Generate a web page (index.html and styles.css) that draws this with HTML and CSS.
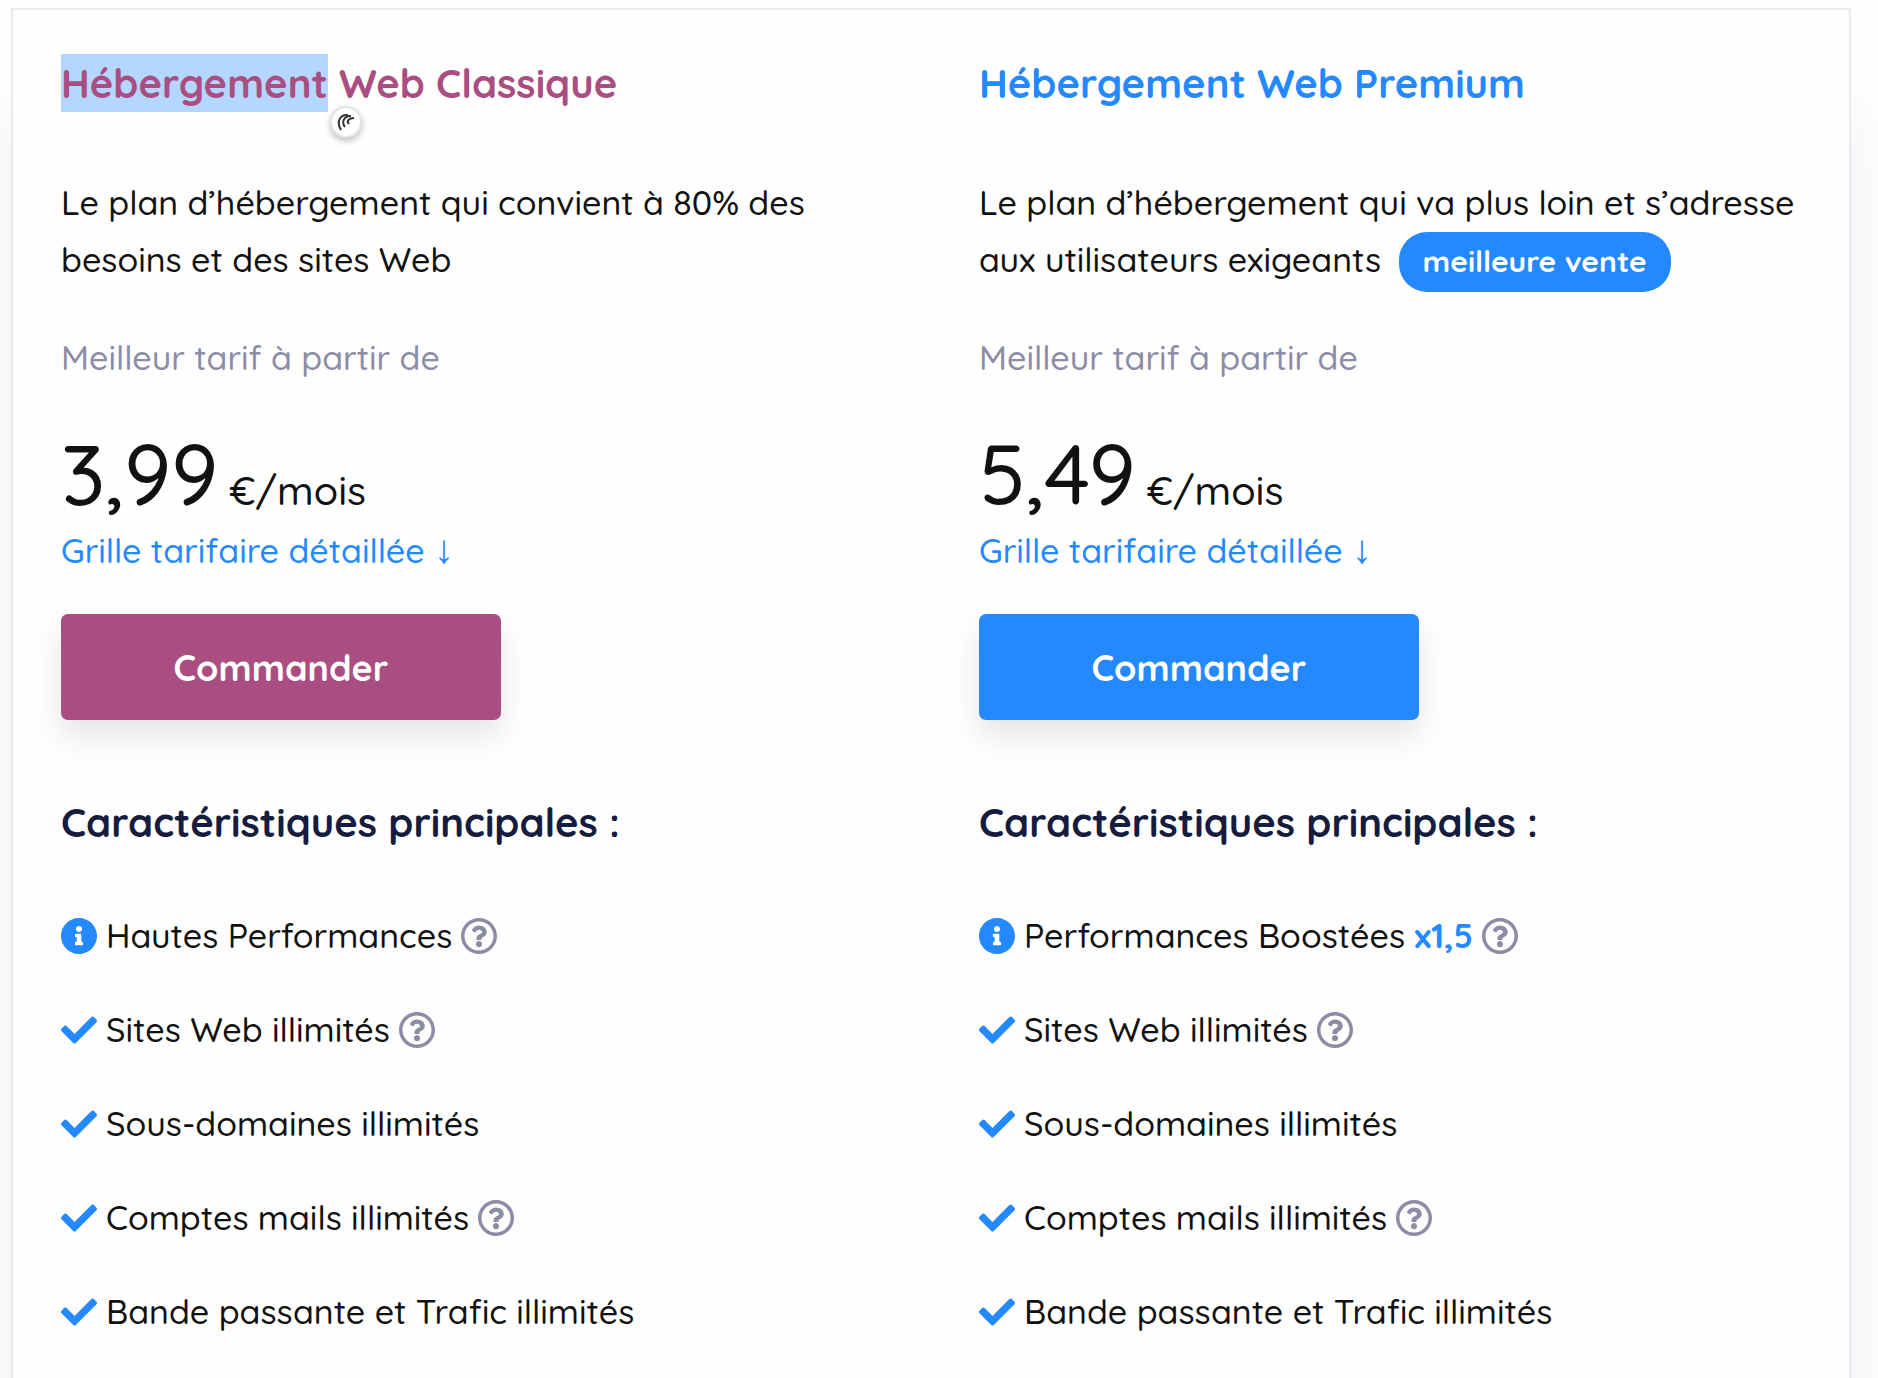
FILE: index.html
```html
<!DOCTYPE html>
<html lang="fr">
<head>
    <meta charset="UTF-8">
    <meta name="viewport" content="width=device-width, initial-scale=1.0">
    <title>Hébergement Web</title>
    <link rel="stylesheet" href="styles.css">
</head>
<body>
    <!-- Icons -->
    <svg class="sprite" aria-hidden="true">
        <symbol id="check" viewBox="0 0 512 512">
            <path d="M173.898 439.404l-166.4-166.4c-9.997-9.997-9.997-26.206 0-36.204l36.203-36.204c9.997-9.998 26.207-9.998 36.204 0L192 312.69 432.095 72.596c9.997-9.997 26.207-9.997 36.204 0l36.203 36.204c9.997 9.997 9.997 26.206 0 36.204l-294.4 294.401c-9.998 9.997-26.207 9.997-36.204-.001z"/>
        </symbol>
        <symbol id="info" viewBox="8 8 496 496">
            <path d="M256 8C119.043 8 8 119.083 8 256c0 136.997 111.043 248 248 248s248-111.003 248-248C504 119.083 392.957 8 256 8zm0 110c23.196 0 42 18.804 42 42s-18.804 42-42 42-42-18.804-42-42 18.804-42 42-42zm56 254c0 6.627-5.373 12-12 12h-88c-6.627 0-12-5.373-12-12v-24c0-6.627 5.373-12 12-12h12v-64h-12c-6.627 0-12-5.373-12-12v-24c0-6.627 5.373-12 12-12h64c6.627 0 12 5.373 12 12v100h12c6.627 0 12 5.373 12 12v24z"/>
        </symbol>
        <symbol id="question" viewBox="8 8 496 496">
            <path d="M256 8C119.043 8 8 119.083 8 256c0 136.997 111.043 248 248 248s248-111.003 248-248C504 119.083 392.957 8 256 8zm0 448c-110.532 0-200-89.431-200-200 0-110.495 89.472-200 200-200 110.491 0 200 89.471 200 200 0 110.53-89.431 200-200 200zm107.244-255.2c0 67.052-72.421 68.084-72.421 92.863V300c0 6.627-5.373 12-12 12h-45.647c-6.627 0-12-5.373-12-12v-8.659c0-35.745 27.1-50.034 47.579-61.516 17.561-9.845 28.324-16.541 28.324-29.579 0-17.246-21.999-28.693-39.784-28.693-23.189 0-33.894 10.977-48.942 29.969-4.057 5.12-11.46 6.071-16.666 2.124l-27.824-21.098c-5.107-3.872-6.251-11.066-2.644-16.363C184.846 131.491 214.94 112 261.794 112c49.071 0 101.45 38.304 101.45 88.8zM298 368c0 23.159-18.841 42-42 42s-42-18.841-42-42 18.841-42 42-42 42 18.841 42 42z"/>
        </symbol>
    </svg>

    <main class="plans">
        <!-- Classique -->
        <section class="plan classique">
            <h2><mark>Hébergement<button class="bubble" type="button" aria-label="Assistant">
                <svg viewBox="0 0 18 18">
                    <path d="M4 17C-1 9 3 1 11 2"/>
                    <path d="M8 14C4 9 7 3 14 3"/>
                    <path d="M12 11C9 8 12 5 17 5"/>
                </svg>
            </button></mark> Web Classique</h2>
            <p class="description">Le plan d’hébergement qui convient à 80% des besoins et des sites Web</p>
            <p class="tarif">Meilleur tarif à partir de</p>
            <p class="price"><span class="amount">3,99</span> €/mois</p>
            <p class="grille"><a href="#tarifs">Grille tarifaire détaillée <span class="arrow">↓</span></a></p>
            <button class="commander" type="button">Commander</button>
            <h3>Caractéristiques principales :</h3>
            <ul class="features">
                <li><svg class="icon"><use href="#info"/></svg><span>Hautes Performances</span><button class="help" type="button" aria-label="Aide"><svg class="icon"><use href="#question"/></svg></button></li>
                <li><svg class="icon"><use href="#check"/></svg><span>Sites Web illimités</span><button class="help" type="button" aria-label="Aide"><svg class="icon"><use href="#question"/></svg></button></li>
                <li><svg class="icon"><use href="#check"/></svg><span>Sous-domaines illimités</span></li>
                <li><svg class="icon"><use href="#check"/></svg><span>Comptes mails illimités</span><button class="help" type="button" aria-label="Aide"><svg class="icon"><use href="#question"/></svg></button></li>
                <li><svg class="icon"><use href="#check"/></svg><span>Bande passante et Trafic illimités</span></li>
            </ul>
        </section>

        <!-- Premium -->
        <section class="plan premium">
            <h2>Hébergement Web Premium</h2>
            <p class="description">Le plan d’hébergement qui va plus loin et s’adresse aux utilisateurs exigeants <span class="badge">meilleure vente</span></p>
            <p class="tarif">Meilleur tarif à partir de</p>
            <p class="price"><span class="amount">5,49</span> €/mois</p>
            <p class="grille"><a href="#tarifs">Grille tarifaire détaillée <span class="arrow">↓</span></a></p>
            <button class="commander" type="button">Commander</button>
            <h3>Caractéristiques principales :</h3>
            <ul class="features">
                <li><svg class="icon"><use href="#info"/></svg><span>Performances Boostées <strong>x1,5</strong></span><button class="help" type="button" aria-label="Aide"><svg class="icon"><use href="#question"/></svg></button></li>
                <li><svg class="icon"><use href="#check"/></svg><span>Sites Web illimités</span><button class="help" type="button" aria-label="Aide"><svg class="icon"><use href="#question"/></svg></button></li>
                <li><svg class="icon"><use href="#check"/></svg><span>Sous-domaines illimités</span></li>
                <li><svg class="icon"><use href="#check"/></svg><span>Comptes mails illimités</span><button class="help" type="button" aria-label="Aide"><svg class="icon"><use href="#question"/></svg></button></li>
                <li><svg class="icon"><use href="#check"/></svg><span>Bande passante et Trafic illimités</span></li>
            </ul>
        </section>
    </main>
</body>
</html>
```
FILE: styles.css
```css
* {
    box-sizing: border-box;
}

body {
    margin: 0;
    padding: 8px 27px 0 11px;
    min-height: 100vh;
    display: flex;
    background-color: #fefefe;
    color: #111;
    font-family: Quicksand, Lato, sans-serif;
    font-size: 34px;
    font-weight: 500;
    line-height: 57px;
}

h2, h3, p, ul {
    margin: 0;
    padding: 0;
}

button {
    font-family: inherit;
    border: none;
    cursor: pointer;
}

.sprite {
    display: none;
}

.plans {
    flex: 1;
    display: grid;
    grid-template-columns: 1fr 1fr;
    background-color: #fefefe;
    border: 2px solid #e9eaef;
    border-bottom: none;
    box-shadow: 0 100px 60px rgba(22, 28, 80, 0.06);
}

.plan {
    padding: 44px 48px 34px;
}

h2 {
    font-size: 40px;
    line-height: 58px;
    margin-bottom: 62px;
}

.classique h2 {
    color: #aa4e82;
}

.premium h2 {
    color: #2489ff;
}

mark {
    position: relative;
    display: inline-block;
    background-color: #b3d7ff;
    color: inherit;
}

.bubble {
    position: absolute;
    left: 100%;
    top: 100%;
    width: 32px;
    height: 32px;
    margin: -6px 0 0 2px;
    padding: 5px;
    display: flex;
    border: 2px solid #e3e3e3;
    border-radius: 50%;
    background-color: #fff;
    box-shadow: 0 3px 6px rgba(0, 0, 0, 0.25);
}

.bubble svg {
    width: 100%;
    fill: none;
    stroke: #333;
    stroke-width: 2;
}

.description {
    margin-bottom: 41px;
}

.badge {
    margin-left: 8px;
    padding: 10px 24px 12px;
    border-radius: 28px;
    background-color: #2489ff;
    color: #fff;
    font-size: 30px;
    font-weight: bold;
    line-height: 30px;
}

.tarif {
    color: #8c8ca6;
    margin-bottom: 40px;
}

.price {
    font-size: 40px;
}

.amount {
    font-size: 84px;
    line-height: 96px;
}

.grille {
    margin-bottom: 35px;
}

.grille a {
    color: #2489ff;
    text-decoration: none;
}

.arrow {
    font-family: "Liberation Serif", serif;
    font-size: 40px;
    font-weight: normal;
    line-height: 40px;
}

.commander {
    display: block;
    width: 440px;
    max-width: 100%;
    height: 106px;
    border-radius: 7px;
    color: #fff;
    font-size: 36px;
    font-weight: bold;
    box-shadow: 0 16px 32px rgba(0, 0, 0, 0.1);
}

.classique .commander {
    background-color: #aa4e82;
}

.premium .commander {
    background-color: #2489ff;
}

h3 {
    margin: 73px 0 56px;
    color: #161c3d;
    font-size: 40px;
    line-height: 58px;
}

.features {
    list-style: none;
    display: grid;
    gap: 37px;
}

.features li {
    display: flex;
    align-items: center;
    gap: 9px;
}

.icon {
    display: block;
    width: 36px;
    height: 36px;
    fill: #2489ff;
}

.features strong {
    color: #2489ff;
}

.help {
    padding: 0;
    background: none;
}

.help .icon {
    fill: #8c8ca6;
}
```
